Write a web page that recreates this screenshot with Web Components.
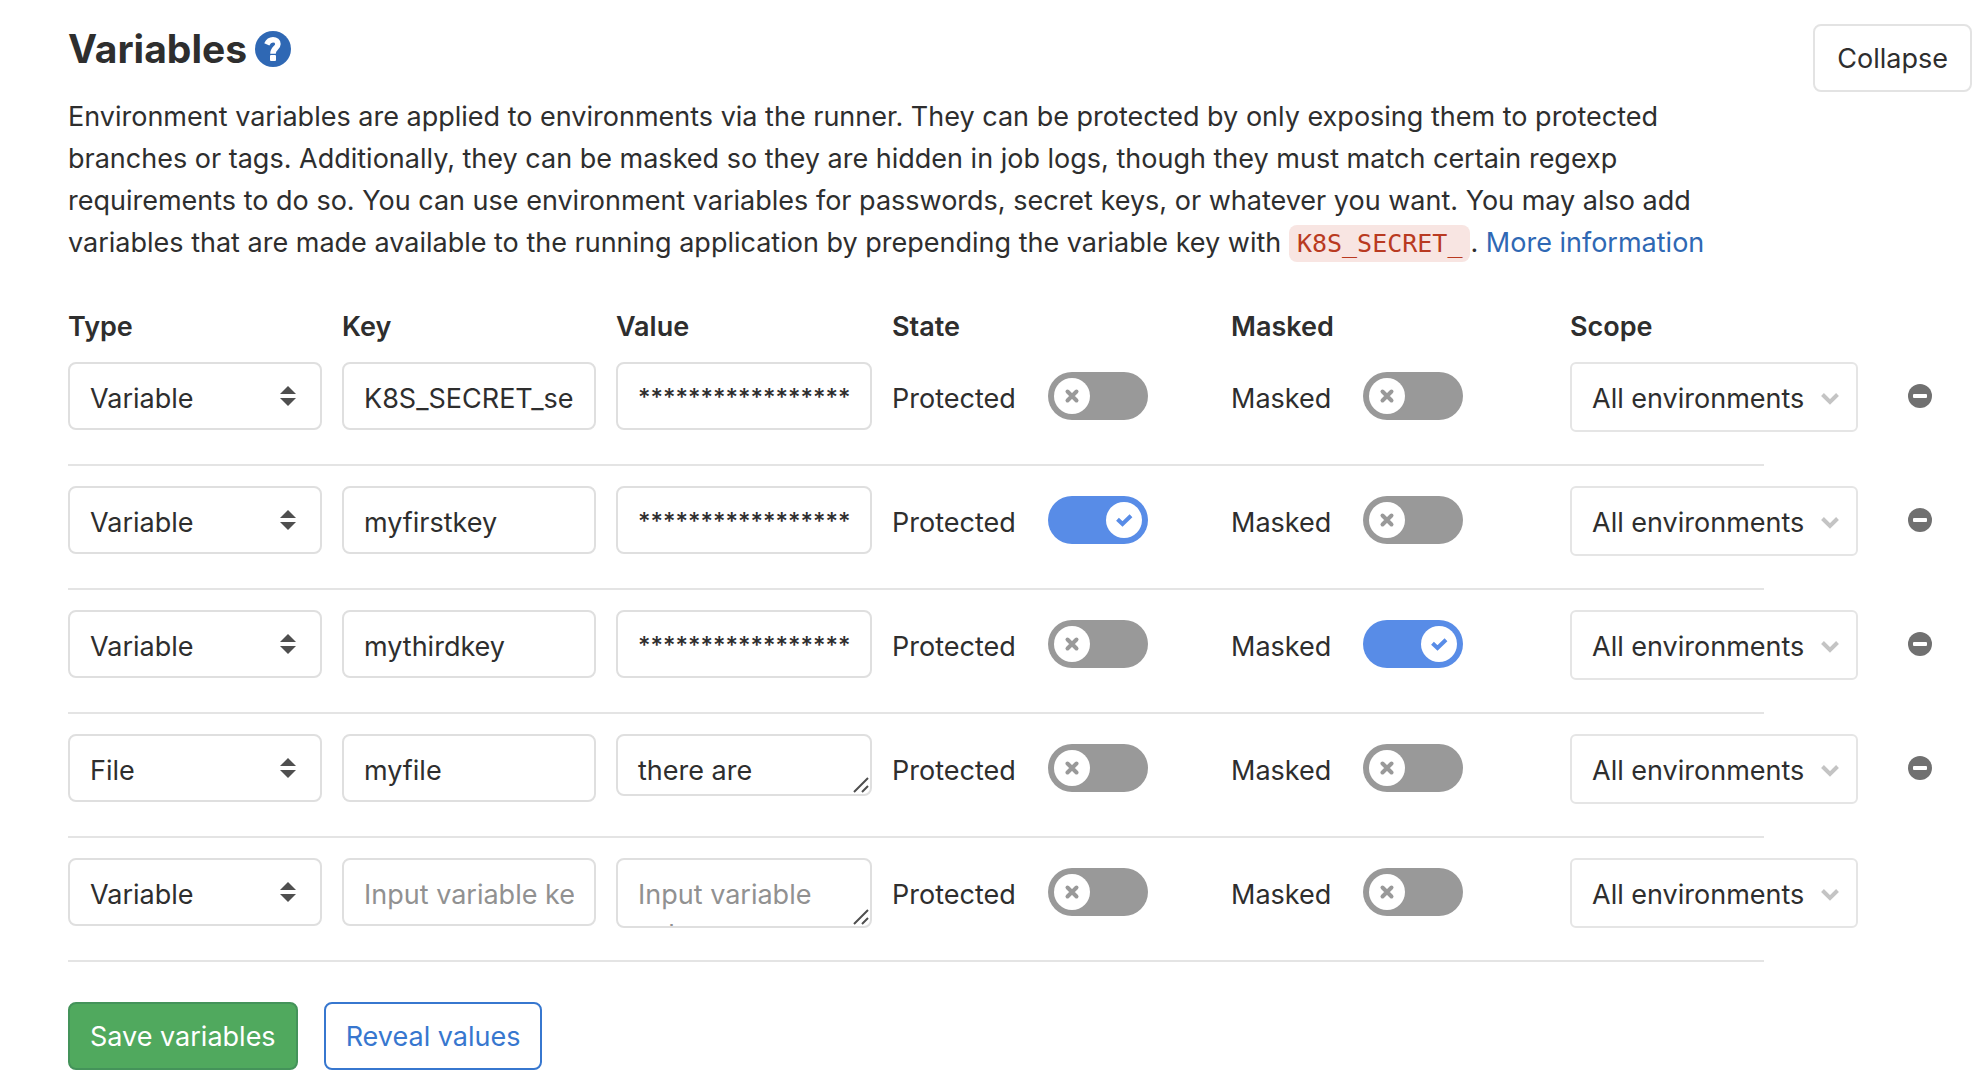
<!DOCTYPE html>
<html lang="en">
<head>
<meta charset="utf-8">
<title>Variables</title>
<style>
  body { margin: 0; background: #fff; color: #2e2e2e; font: 27px/42px Inter, "Liberation Sans", sans-serif; }
</style>
</head>
<body>
<variables-panel>
  <span slot="title">Variables</span>
  <span slot="description">Environment variables are applied to environments via the runner. They can be protected by only exposing them to protected branches or tags. Additionally, they can be masked so they are hidden in job logs, though they must match certain regexp requirements to do so. You can use environment variables for passwords, secret keys, or whatever you want. You may also add variables that are made available to the running application by prepending the variable key with <inline-code>K8S_SECRET_</inline-code>. <text-link href="#info">More information</text-link></span>
  <variable-head></variable-head>
  <variable-row type="Variable" key="K8S_SECRET_se" value="*****************" removable></variable-row>
  <variable-row type="Variable" key="myfirstkey" value="*****************" protected removable></variable-row>
  <variable-row type="Variable" key="mythirdkey" value="*****************" masked removable></variable-row>
  <variable-row type="File" key="myfile" value="there are" multiline="62" removable></variable-row>
  <variable-row type="Variable" multiline="70"></variable-row>
  <action-button slot="actions" kind="success">Save variables</action-button>
  <action-button slot="actions" kind="info">Reveal values</action-button>
</variables-panel>

<script>
const define = (name, markup, setup) => {
  const template = document.createElement('template');
  template.innerHTML = markup;
  customElements.define(name, class extends HTMLElement {
    constructor() {
      super();
      this.attachShadow({ mode: 'open' }).append(template.content.cloneNode(true));
    }
    connectedCallback() { if (setup) setup(this, this.shadowRoot); }
  });
};

const columns = `
  display: grid; column-gap: 20px;
  grid-template-columns: minmax(0,254fr) minmax(0,254fr) minmax(0,256fr) minmax(0,319fr) minmax(0,319fr) minmax(0,288fr) minmax(0,54fr);`;

define('inline-code', `
  <style>
    :host { display: inline; }
    code { font: 25px/30px "DejaVu Sans Mono", monospace; color: #b93a21; background: #f8e5e2; padding: 4px 8px; border-radius: 8px; }
  </style>
  <code><slot></slot></code>`);

define('text-link', `
  <style>
    :host { display: inline; }
    a { color: #2f68b4; text-decoration: none; }
    a:hover { text-decoration: underline; }
  </style>
  <a><slot></slot></a>`,
  (host, root) => { root.querySelector('a').href = host.getAttribute('href'); });

define('action-button', `
  <style>
    :host { display: block; flex: none; }
    button { font: inherit; color: #2e2e2e; background: #fff; border: 2px solid #e3e3e3; border-radius: 8px; height: 68px; padding: 2px 22px 0; cursor: pointer; white-space: nowrap; display: block; }
    :host([kind]) button { padding: 2px 20px 0; }
    :host([kind=success]) button { color: #fff; background: #50a95e; border-color: #44935a; }
    :host([kind=info]) button { color: #3777cf; border-color: #3777cf; }
  </style>
  <button type="button"><slot></slot></button>`);

define('help-link', `
  <style>
    :host { display: block; }
    a, svg { display: block; width: 36px; height: 36px; }
  </style>
  <a href="#help" aria-label="Help"><svg viewBox="0 0 36 36">
    <circle cx="18" cy="18" r="18" fill="#2f68b4"/>
    <path d="M11.800 13.400C13.200 10.300 15.200 8.800 18 8.800c2.900 0 4.900 1.700 4.900 4.200 0 4.200-4.900 4.200-4.900 9.700" fill="none" stroke="#fff" stroke-width="5.600"/>
    <rect x="15" y="24" width="6" height="6" rx="1" fill="#fff"/>
  </svg></a>`);

define('toggle-switch', `
  <style>
    :host { display: block; }
    label { display: flex; align-items: center; gap: 32px; height: 68px; cursor: pointer; }
    span { padding-top: 5px; }
    .track { position: relative; flex: none; width: 100px; height: 48px; }
    input { appearance: none; display: block; width: 100px; height: 48px; margin: 0; border-radius: 24px; background: #999; cursor: pointer; }
    input:checked { background: #588ce7; }
    svg { position: absolute; top: 6px; left: 6px; width: 36px; height: 36px; border-radius: 18px; background: #fff; pointer-events: none; fill: none; stroke-width: 4; stroke-linecap: round; }
    .on { left: auto; right: 6px; stroke: #588ce7; stroke-linecap: butt; display: none; }
    .off { stroke: #999; }
    input:checked ~ .on { display: block; }
    input:checked ~ .off { display: none; }
  </style>
  <label><span><slot></slot></span>
    <div class="track"><input type="checkbox">
      <svg class="off" viewBox="0 0 36 36"><path d="M13.500 13.500l9 9m0-9l-9 9"/></svg>
      <svg class="on" viewBox="0 0 36 36"><path d="M11.500 17.200l5 4.800 8.500-8.300"/></svg>
    </div>
  </label>`,
  (host, root) => { root.querySelector('input').checked = host.hasAttribute('checked'); });

define('select-box', `
  <style>
    :host { display: block; position: relative; }
    select { appearance: none; display: block; box-sizing: border-box; width: 100%; height: 68px; margin: 0; padding: 5px 20px 0; font: inherit; color: inherit; background: #fff; border: 2px solid #dfdfdf; border-radius: 8px; }
    svg { position: absolute; top: 24px; right: 26px; width: 16px; height: 20px; fill: #4f4f4f; pointer-events: none; }
    .chevron { display: none; }
    :host([look=menu]) select { height: 70px; padding: 3px 20px 0; border-color: #e5e5e5; border-radius: 6px; }
    :host([look=menu]) .sort { display: none; }
    :host([look=menu]) .chevron { display: block; top: 30px; right: 18px; width: 20px; height: 14px; fill: none; stroke: #c4c4c4; stroke-width: 4; }
  </style>
  <select></select>
  <svg class="sort" viewBox="0 0 16 20"><path d="M8 0l8 8H0zM8 20l8-8H0z"/></svg>
  <svg class="chevron" viewBox="0 0 20 14"><path d="M2.500 2.500L10 10l7.500-7.500"/></svg>`,
  (host, root) => {
    const select = root.querySelector('select');
    select.setAttribute('aria-label', host.getAttribute('label'));
    select.replaceChildren(...host.getAttribute('options').split(',').map(o => new Option(o)));
    select.value = host.getAttribute('value');
  });

define('text-field', `
  <style>
    :host { display: block; position: relative; }
    input, textarea { display: block; box-sizing: border-box; width: 100%; height: 68px; margin: 0; font: inherit; color: inherit; background: #fff; border: 2px solid #dfdfdf; border-radius: 8px; }
    input { padding: 4px 20px 0; }
    .secret { padding: 2px 16px 0 20px; font-size: 24px; font-weight: 500; }
    textarea { padding: 15px 20px; line-height: 40px; resize: none; overflow: hidden; }
    ::placeholder { color: #919191; opacity: 1; }
    svg { position: absolute; right: 3px; bottom: 3px; width: 16px; height: 16px; fill: none; stroke: #4f4f4f; stroke-width: 2; pointer-events: none; }
  </style>`,
  (host, root) => {
    const lines = host.getAttribute('multiline');
    const field = document.createElement(lines ? 'textarea' : 'input');
    field.setAttribute('aria-label', host.getAttribute('label'));
    field.placeholder = host.getAttribute('placeholder') || '';
    field.value = host.getAttribute('value') || '';
    field.classList.toggle('secret', field.value.startsWith('*'));
    root.append(field);
    if (lines) {
      field.style.height = lines + 'px';
      field.insertAdjacentHTML('afterend', '<svg viewBox="0 0 16 16"><path d="M1 15L15 1M9 15l6-6"/></svg>');
    }
  });

define('variable-head', `
  <style>
    :host { ${columns} margin: 42px 0 14px; font-weight: 600; }
  </style>
  <div>Type</div><div>Key</div><div>Value</div><div>State</div><div>Masked</div><div>Scope</div>`);

define('variable-row', `
  <style>
    :host { display: block; margin-bottom: 20px; }
    .fields { ${columns} align-items: start; padding-bottom: 32px; }
    hr { width: 91%; height: 2px; margin: 0; border: 0; background: #e4e4e4; }
    .remove { justify-self: end; display: flex; align-items: center; height: 68px; padding: 0; border: 0; background: none; cursor: pointer; }
    .remove svg { width: 24px; height: 24px; }
    :host(:not([removable])) .remove { display: none; }
  </style>
  <div class="fields"></div><hr>`,
  (host, root) => {
    const attr = n => host.getAttribute(n) || '';
    root.querySelector('.fields').innerHTML = `
      <select-box label="Type" options="Variable,File" value="${attr('type')}"></select-box>
      <text-field label="Key" placeholder="Input variable key" value="${attr('key')}"></text-field>
      <text-field label="Value" placeholder="Input variable value" value="${attr('value')}" ${attr('multiline') && `multiline="${attr('multiline')}"`}></text-field>
      <toggle-switch ${host.hasAttribute('protected') ? 'checked' : ''}>Protected</toggle-switch>
      <toggle-switch ${host.hasAttribute('masked') ? 'checked' : ''}>Masked</toggle-switch>
      <select-box look="menu" label="Scope" options="All environments" value="All environments"></select-box>
      <button class="remove" type="button" aria-label="Remove variable"><svg viewBox="0 0 24 24"><circle cx="12" cy="12" r="12" fill="#707070"/><rect x="5" y="10" width="14" height="4" rx="1" fill="#fff"/></svg></button>`;
  });

define('variables-panel', `
  <style>
    :host { display: block; padding: 24px 4px 18px 68px; }
    header { display: flex; justify-content: space-between; align-items: flex-start; gap: 48px; }
    .intro { flex: 1; min-width: 0; }
    .title { display: flex; align-items: center; gap: 8px; }
    h2 { margin: 0; font-size: 39px; line-height: 50px; font-weight: 700; }
    p { margin: 22px 0 0; }
    .rows { padding-right: 40px; }
    .actions { display: flex; gap: 26px; padding-top: 20px; }
  </style>
  <header>
    <div class="intro">
      <div class="title"><h2><slot name="title"></slot></h2><help-link></help-link></div>
      <p><slot name="description"></slot></p>
    </div>
    <action-button>Collapse</action-button>
  </header>
  <div class="rows"><slot></slot></div>
  <div class="actions"><slot name="actions"></slot></div>`);
</script>
</body>
</html>
